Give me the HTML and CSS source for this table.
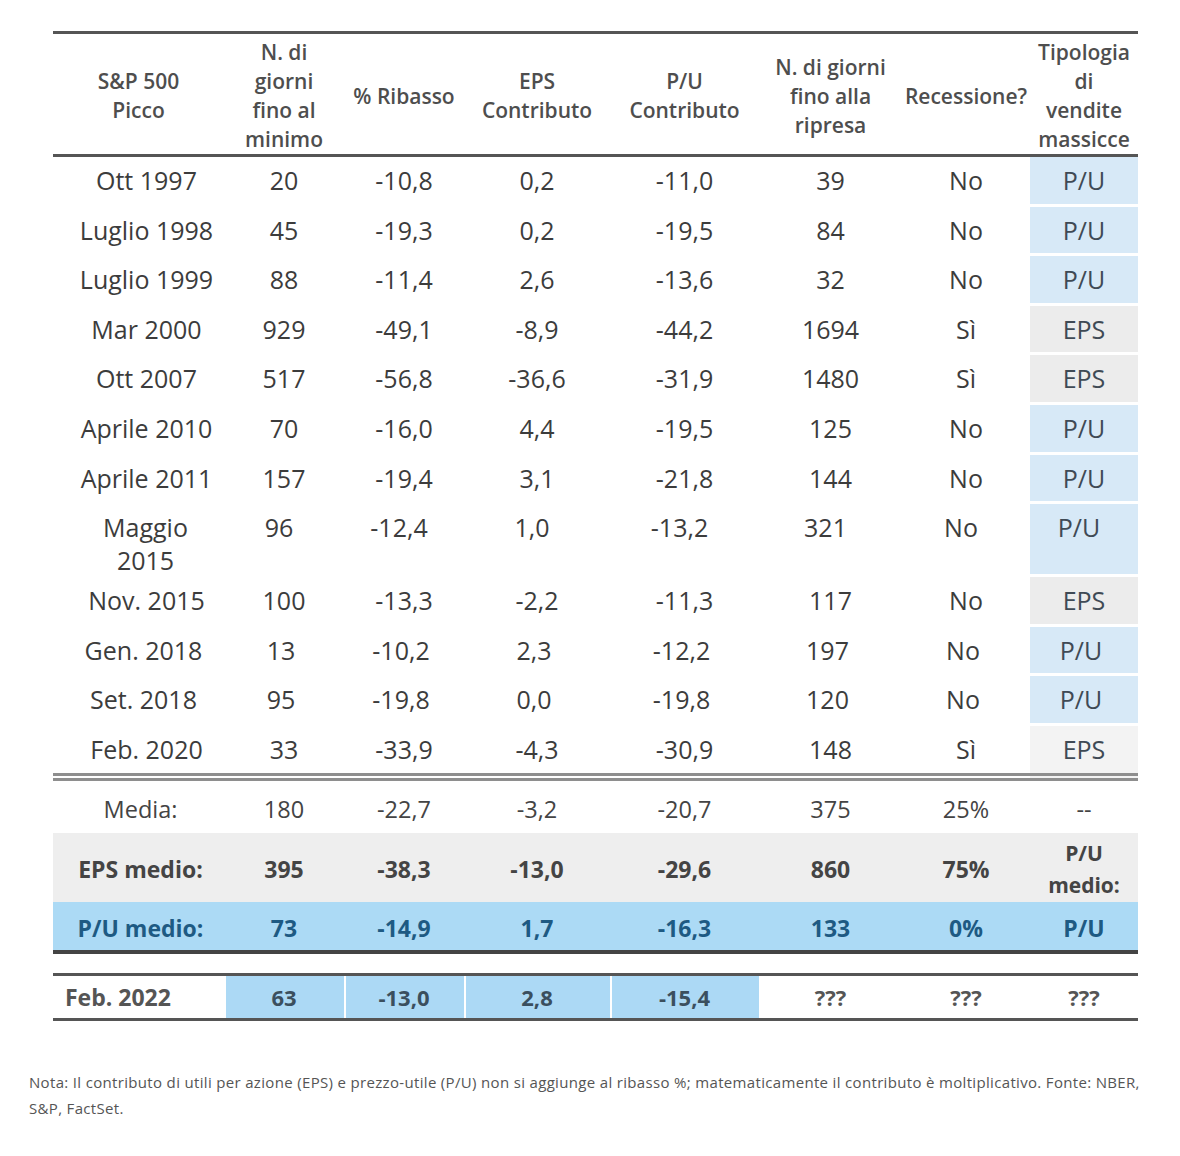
FILE: index.html
```html
<!DOCTYPE html>
<html lang="it">
<head>
<meta charset="utf-8">
<title>S&amp;P 500 vendite massicce</title>
<link rel="stylesheet" href="styles.css">
</head>
<body>
<div class="page">
  <table class="main">
    <colgroup>
      <col class="w1"><col class="w2"><col class="w3"><col class="w4"><col class="w5"><col class="w6"><col class="w7"><col class="w8">
    </colgroup>
    <thead>
      <tr>
        <th>S&amp;P 500<br>Picco</th>
        <th>N. di<br>giorni<br>fino al<br>minimo</th>
        <th>% Ribasso</th>
        <th>EPS<br>Contributo</th>
        <th>P/U<br>Contributo</th>
        <th>N. di giorni<br>fino alla<br>ripresa</th>
        <th>Recessione?</th>
        <th>Tipologia<br>di<br>vendite<br>massicce</th>
      </tr>
    </thead>
    <tbody class="data">
      <tr><td class="c1">Ott 1997</td><td>20</td><td>-10,8</td><td>0,2</td><td>-11,0</td><td>39</td><td>No</td><td class="type pu">P/U</td></tr>
      <tr><td class="c1">Luglio 1998</td><td>45</td><td>-19,3</td><td>0,2</td><td>-19,5</td><td>84</td><td>No</td><td class="type pu">P/U</td></tr>
      <tr><td class="c1">Luglio 1999</td><td>88</td><td>-11,4</td><td>2,6</td><td>-13,6</td><td>32</td><td>No</td><td class="type pu">P/U</td></tr>
      <tr><td class="c1">Mar 2000</td><td>929</td><td>-49,1</td><td>-8,9</td><td>-44,2</td><td>1694</td><td>Sì</td><td class="type eps">EPS</td></tr>
      <tr><td class="c1">Ott 2007</td><td>517</td><td>-56,8</td><td>-36,6</td><td>-31,9</td><td>1480</td><td>Sì</td><td class="type eps">EPS</td></tr>
      <tr><td class="c1">Aprile 2010</td><td>70</td><td>-16,0</td><td>4,4</td><td>-19,5</td><td>125</td><td>No</td><td class="type pu">P/U</td></tr>
      <tr><td class="c1">Aprile 2011</td><td>157</td><td>-19,4</td><td>3,1</td><td>-21,8</td><td>144</td><td>No</td><td class="type pu">P/U</td></tr>
      <tr class="shift"><td class="c1">Maggio<br>2015</td><td>96</td><td>-12,4</td><td>1,0</td><td>-13,2</td><td>321</td><td>No</td><td class="type pu">P/U</td></tr>
      <tr><td class="c1">Nov. 2015</td><td>100</td><td>-13,3</td><td>-2,2</td><td>-11,3</td><td>117</td><td>No</td><td class="type eps">EPS</td></tr>
      <tr class="shift-s"><td class="c1">Gen. 2018</td><td>13</td><td>-10,2</td><td>2,3</td><td>-12,2</td><td>197</td><td>No</td><td class="type pu">P/U</td></tr>
      <tr class="shift-s"><td class="c1">Set. 2018</td><td>95</td><td>-19,8</td><td>0,0</td><td>-19,8</td><td>120</td><td>No</td><td class="type pu">P/U</td></tr>
      <tr class="last"><td class="c1">Feb. 2020</td><td>33</td><td>-33,9</td><td>-4,3</td><td>-30,9</td><td>148</td><td>Sì</td><td class="type eps light">EPS</td></tr>
    </tbody>
    <tbody class="summary">
      <tr class="media"><td class="c1">Media:</td><td>180</td><td>-22,7</td><td>-3,2</td><td>-20,7</td><td>375</td><td>25%</td><td>--</td></tr>
      <tr class="eps-medio"><td class="c1">EPS medio:</td><td>395</td><td>-38,3</td><td>-13,0</td><td>-29,6</td><td>860</td><td>75%</td><td>P/U<br>medio:</td></tr>
      <tr class="pu-medio"><td class="c1">P/U medio:</td><td>73</td><td>-14,9</td><td>1,7</td><td>-16,3</td><td>133</td><td>0%</td><td>P/U</td></tr>
    </tbody>
  </table>

  <table class="current">
    <colgroup>
      <col class="w1"><col class="w2"><col class="w3"><col class="w4"><col class="w5"><col class="w6"><col class="w7"><col class="w8">
    </colgroup>
    <tbody>
      <tr><td class="label">Feb. 2022</td><td class="hl">63</td><td class="hl">-13,0</td><td class="hl">2,8</td><td class="hl">-15,4</td><td>???</td><td>???</td><td>???</td></tr>
    </tbody>
  </table>

  <p class="note">Nota: Il contributo di utili per azione (EPS) e prezzo-utile (P/U) non si aggiunge al ribasso %; matematicamente il contributo è moltiplicativo. Fonte: NBER, S&amp;P, FactSet.</p>
</div>
</body>
</html>
```

FILE: styles.css
```css
* { box-sizing: border-box; }

html, body {
  margin: 0;
  padding: 0;
  background: #ffffff;
}

.page {
  width: 1180px;
  padding: 31px 0 0 29px;
  font-family: "Open Sans", "Noto Sans", sans-serif;
  color: #3c3c3c;
}

table {
  border-collapse: separate;
  border-spacing: 0;
  table-layout: fixed;
  width: 1085px;
  margin-left: 24px;
}

.w1 { width: 171px; }
.w2 { width: 120px; }
.w3 { width: 120px; }
.w4 { width: 146px; }
.w5 { width: 149px; }
.w6 { width: 143px; }
.w7 { width: 128px; }
.w8 { width: 108px; }

/* header */
.main thead th {
  font-weight: 600;
  font-size: 21px;
  line-height: 29px;
  color: #4e4e4e;
  text-align: center;
  vertical-align: middle;
  white-space: nowrap;
  padding: 4px 0 0;
  border-top: 3px solid #555555;
  border-bottom: 3px solid #555555;
}

/* data rows */
.data td {
  font-size: 25px;
  line-height: 33px;
  height: 49.6px;
  padding: 7px 0 0;
  text-align: center;
  vertical-align: top;
  white-space: nowrap;
}

.data td.c1 { padding-left: 16px; }

.data .shift td { padding-right: 10px; }
.data .shift td.c1 { padding-right: 0; padding-left: 14px; }
.data .shift-s td { padding-right: 6px; }
.data .shift-s td.c1 { padding-right: 0; padding-left: 10px; }

.data td.type {
  color: #3f4a55;
  box-shadow: inset 0 -3px 0 #ffffff;
}
.data td.pu { background: #d7e9f7; }
.data td.eps { background: #ececec; }
.data td.eps.light { background: #f3f3f3; }

.data tr.last td {
  height: 55px;
  border-bottom: 8px double #8e8e8e;
}
.data tr.last td.type { box-shadow: none; }

/* summary rows */
.summary td {
  text-align: center;
  white-space: nowrap;
}

.summary .media td {
  font-size: 23.5px;
  line-height: 33px;
  padding: 12px 0 7px;
  color: #444444;
}

.summary .eps-medio td {
  background: #eeeeee;
  font-weight: 700;
  font-size: 23px;
  line-height: 32px;
  padding: 4px 0 1px;
  color: #444444;
  vertical-align: middle;
}

.summary .eps-medio td:last-child {
  font-size: 21px;
}

.summary .pu-medio td {
  background: #acdaf5;
  font-weight: 700;
  font-size: 23px;
  line-height: 33px;
  padding: 10px 0 5px;
  color: #1e5a83;
  border-bottom: 4px solid #444444;
}

.summary td.c1 { padding-left: 4px; }

/* current row */
.current {
  margin-top: 19px;
}

.current td {
  border-top: 3px solid #555555;
  border-bottom: 3px solid #555555;
  font-weight: 700;
  font-size: 22px;
  line-height: 32px;
  height: 48px;
  padding: 5px 0 5px;
  text-align: center;
  color: #555555;
}

.current td.label {
  text-align: left;
  padding-left: 12px;
  font-size: 23px;
}

.current td.hl {
  background: #acd9f5;
  box-shadow: inset 2px 0 0 #ffffff;
  color: #3b4f5e;
}

.note {
  margin: 48px 0 0;
  width: 1125px;
  font-family: "Open Sans", "Noto Sans", sans-serif;
  font-size: 15px;
  letter-spacing: 0.33px;
  line-height: 26px;
  color: #555555;
}
```
